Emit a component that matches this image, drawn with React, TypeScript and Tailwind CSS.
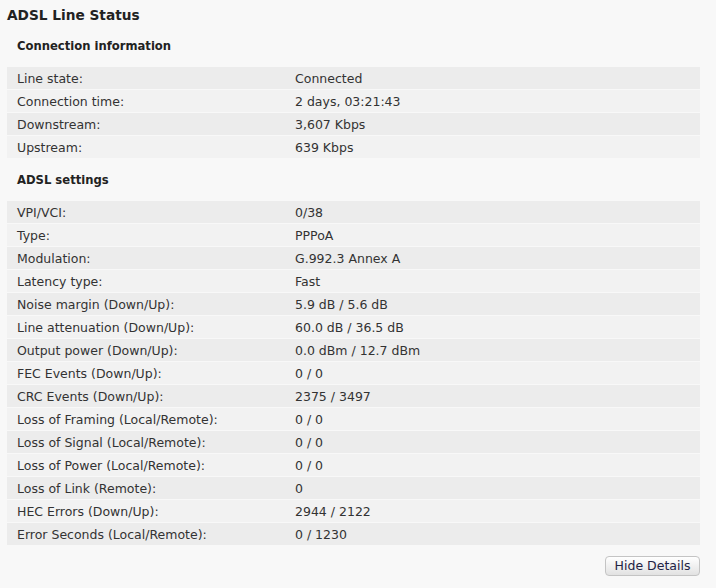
const connection: [string, string][] = [
  ['Line state:', 'Connected'],
  ['Connection time:', '2 days, 03:21:43'],
  ['Downstream:', '3,607 Kbps'],
  ['Upstream:', '639 Kbps'],
]

const adsl: [string, string][] = [
  ['VPI/VCI:', '0/38'],
  ['Type:', 'PPPoA'],
  ['Modulation:', 'G.992.3 Annex A'],
  ['Latency type:', 'Fast'],
  ['Noise margin (Down/Up):', '5.9 dB / 5.6 dB'],
  ['Line attenuation (Down/Up):', '60.0 dB / 36.5 dB'],
  ['Output power (Down/Up):', '0.0 dBm / 12.7 dBm'],
  ['FEC Events (Down/Up):', '0 / 0'],
  ['CRC Events (Down/Up):', '2375 / 3497'],
  ['Loss of Framing (Local/Remote):', '0 / 0'],
  ['Loss of Signal (Local/Remote):', '0 / 0'],
  ['Loss of Power (Local/Remote):', '0 / 0'],
  ['Loss of Link (Remote):', '0'],
  ['HEC Errors (Down/Up):', '2944 / 2122'],
  ['Error Seconds (Local/Remote):', '0 / 1230'],
]

function StatusTable({ rows }: { rows: [string, string][] }) {
  return (
    <div className="flex flex-col gap-px w-[693px]">
      {rows.map(([label, value], i) => (
        <div
          key={label}
          className={`flex h-[22px] items-center pt-[2px] text-[12.5px] ${i % 2 === 0 ? 'bg-[#ececec]' : 'bg-[#f2f2f2]'}`}
        >
          <span className="w-[288px] pl-[10px]">{label}</span>
          <span>{value}</span>
        </div>
      ))}
    </div>
  )
}

export default function App() {
  return (
    <div
      className="w-[716px] h-[588px] bg-[#f8f8f8] text-[#333333] text-[12px] px-[7px] pt-[5px]"
      style={{ fontFamily: '"DejaVu Sans", Verdana, sans-serif' }}
    >
      <h1 className="text-[13.7px] font-bold text-[#222222] leading-[20px]">ADSL Line Status</h1>

      <h2 className="text-[11.6px] font-bold text-[#222222] pl-[10px] pt-[14px] pb-[13px] leading-[15px]">Connection information</h2>
      <StatusTable rows={connection} />

      <h2 className="text-[11.6px] font-bold text-[#222222] pl-[10px] pt-[15px] pb-[13px] leading-[15px]">ADSL settings</h2>
      <StatusTable rows={adsl} />

      <div className="flex justify-end w-[693px] pt-[11px]">
        <button className="h-[20px] w-[95px] rounded-[4px] border border-[#c4c4c4] bg-gradient-to-b from-white to-[#e2e2e2] text-[12.5px] text-[#222244] leading-none pt-px">
          Hide Details
        </button>
      </div>
    </div>
  )
}
